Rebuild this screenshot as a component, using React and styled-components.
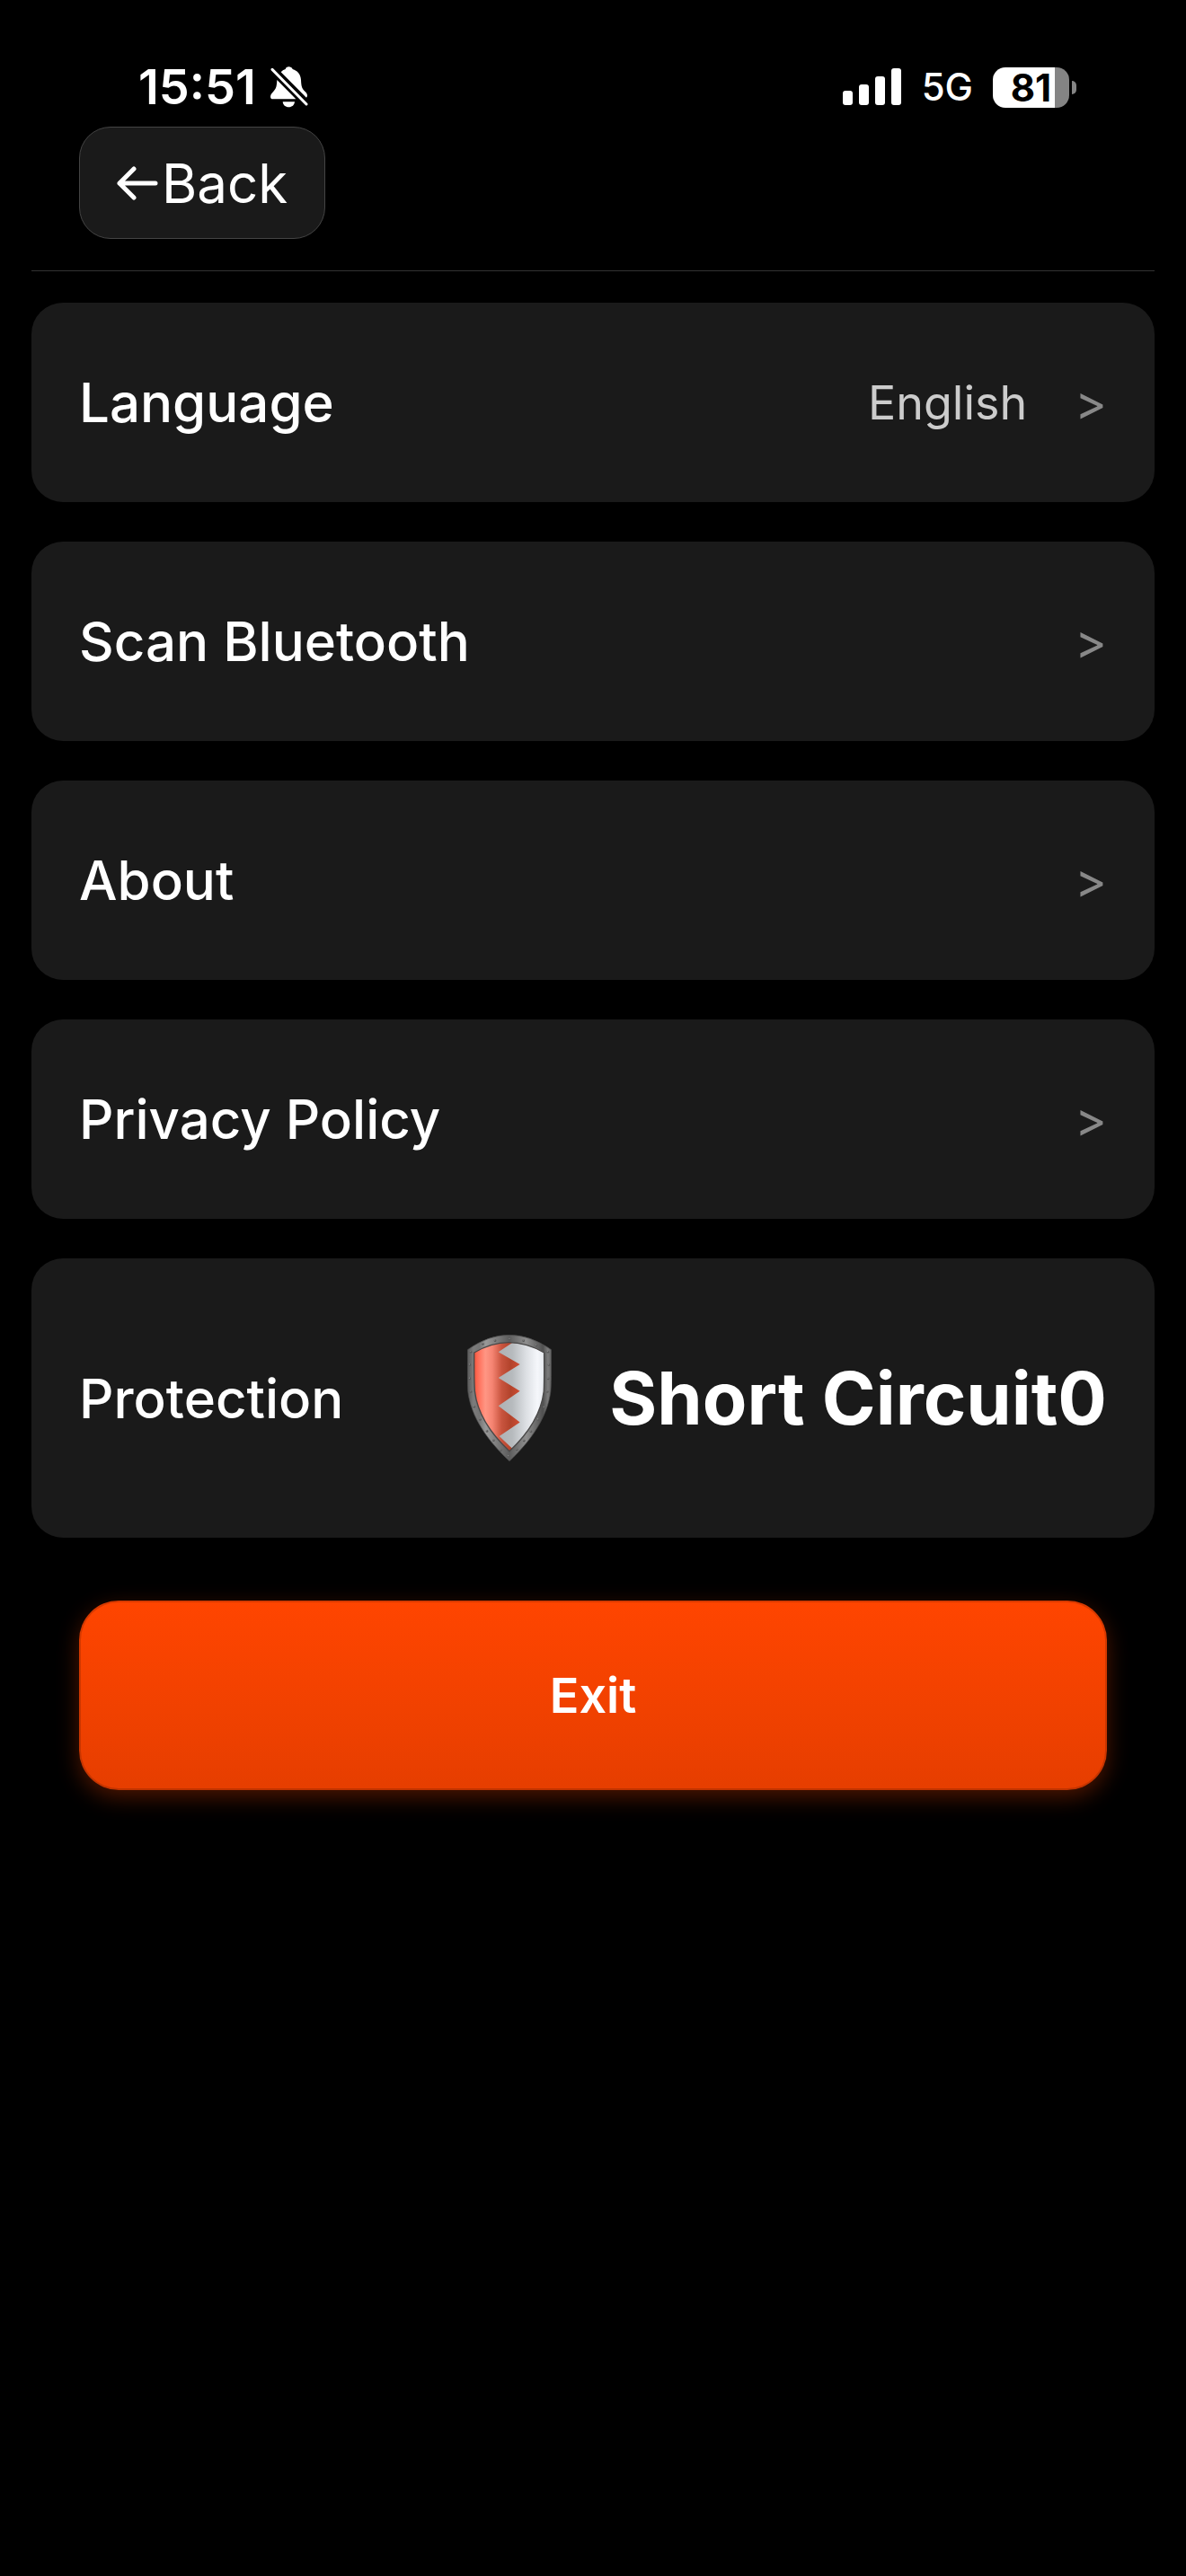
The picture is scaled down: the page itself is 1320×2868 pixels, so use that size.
import React from "react";
import styled, { createGlobalStyle } from "styled-components";

const GlobalStyle = createGlobalStyle`
  * {
    box-sizing: border-box;
  }

  body {
    margin: 0;
    background: #000;
    color: #fff;
    font-family: Inter, "Liberation Sans", sans-serif;
  }

  button {
    font-family: inherit;
    color: inherit;
    cursor: pointer;
  }
`;

const rows = [
  { label: "Language", value: "English" },
  { label: "Scan Bluetooth" },
  { label: "About" },
  { label: "Privacy Policy" },
];

const BellOff = () => (
  <svg width="42" height="46" viewBox="0 0 126 138" aria-label="Silent" role="img">
    <path
      fill="#fff"
      d="M35 19 C40 13 46 10 50 9 C51 4 56 1 61 1 C67 1 72 4 74 9 C90 14 101 26 102 45 C103 66 105 73 112 80 C119 86 123 91 123 97 C123 100 122 102 120 104 Z"
    />
    <path
      fill="#fff"
      d="M22 45 L85 109 L8 109 C3 109 0 106 0 101 C0 93 6 88 12 81 C19 74 21 66 22 45 Z"
    />
    <path fill="#fff" d="M41 118 H81 C80 129 72 136 61 136 C50 136 42 129 41 118 Z" />
    <path stroke="#fff" strokeWidth="9" strokeLinecap="round" d="M6 10 L120 126" />
  </svg>
);

const Signal = () => (
  <svg width="66" height="42" viewBox="0 0 66 42" fill="#fff" aria-label="Signal" role="img">
    <rect x="0" y="25" width="11" height="16" rx="3" />
    <rect x="18" y="18" width="11" height="23" rx="3" />
    <rect x="36" y="9" width="11" height="32" rx="3" />
    <rect x="54" y="0" width="11" height="41" rx="3" />
  </svg>
);

const ArrowLeft = () => (
  <svg width="46" height="38" viewBox="0 0 46 38" aria-hidden="true">
    <path
      d="M43 19 H3 M19 3 L3 19 L19 35"
      fill="none"
      stroke="#fff"
      strokeWidth="5"
      strokeLinecap="round"
      strokeLinejoin="round"
    />
  </svg>
);

const rivets = [
  [142, 14], [93, 19], [188, 19], [52, 30], [231, 35], [12, 57], [270, 57],
  [8, 100], [273, 100], [8, 146], [271, 146], [12, 190], [268, 190],
  [23, 240], [257, 242], [43, 283], [237, 283], [66, 322], [213, 323],
  [88, 353], [190, 354], [112, 386], [166, 384], [138, 406],
];

const Shield = () => (
  <svg width="94" height="141" viewBox="0 0 282 424" aria-label="Shield" role="img">
    <defs>
      <linearGradient id="rim" x1="0" y1="0" x2="1" y2="0">
        <stop offset="0" stopColor="#5a5a5a" />
        <stop offset="0.07" stopColor="#7c7c7c" />
        <stop offset="0.14" stopColor="#747474" />
        <stop offset="0.22" stopColor="#999" />
        <stop offset="0.5" stopColor="#5c5c5c" />
        <stop offset="0.7" stopColor="#8e8e8e" />
        <stop offset="0.9" stopColor="#505050" />
        <stop offset="0.96" stopColor="#7c7c7c" />
        <stop offset="1" stopColor="#606060" />
      </linearGradient>
      <linearGradient id="red" gradientUnits="userSpaceOnUse" x1="22" y1="0" x2="176" y2="0">
        <stop offset="0" stopColor="#f4533a" />
        <stop offset="0.1" stopColor="#ff705b" />
        <stop offset="0.25" stopColor="#ff9684" />
        <stop offset="0.4" stopColor="#f58472" />
        <stop offset="0.6" stopColor="#c9553f" />
        <stop offset="0.8" stopColor="#b2432b" />
        <stop offset="1" stopColor="#d04c32" />
      </linearGradient>
      <linearGradient id="silver" gradientUnits="userSpaceOnUse" x1="104" y1="0" x2="258" y2="0">
        <stop offset="0" stopColor="#aeb1b4" />
        <stop offset="0.3" stopColor="#b6babd" />
        <stop offset="0.6" stopColor="#dcdfe3" />
        <stop offset="0.85" stopColor="#f5f7fb" />
        <stop offset="1" stopColor="#e6e9ee" />
      </linearGradient>
      <clipPath id="face">
        <path d="M23 60 Q138 -8 257 60 C257 95 258 150 256 190 C247 265 200 335 141 390 C82 335 34 265 25 190 C22 150 23 95 23 60 Z" />
      </clipPath>
    </defs>
    <path
      fill="url(#rim)"
      stroke="#4c4c4c"
      strokeWidth="2"
      d="M1 50 Q140 -48 281 50 C281 95 282 150 279 190 C268 275 214 355 141 423 C68 355 12 275 2 190 C0 150 1 95 1 50 Z"
    />
    <g clipPath="url(#face)">
      <rect width="282" height="424" fill="url(#red)" />
      <path
        fill="url(#silver)"
        d="M170 14 L104 58 L176 99 L104 144 L176 189 L104 238 L176 293 L107 340 L160 390 L282 424 V0 Z"
      />
    </g>
    <path
      fill="none"
      stroke="#484848"
      strokeWidth="4"
      d="M23 60 Q138 -8 257 60 C257 95 258 150 256 190 C247 265 200 335 141 390 C82 335 34 265 25 190 C22 150 23 95 23 60 Z"
    />
    {rivets.map(([x, y]) => (
      <g key={`${x}-${y}`}>
        <circle cx={x} cy={y + 1} r="4" fill="#585858" />
        <circle cx={x - 1} cy={y - 1} r="2" fill="#8c8c8c" />
      </g>
    ))}
  </svg>
);

class App extends React.Component {
  render() {
    return (
      <>
        <GlobalStyle />
        <StatusBar>
          <StatusGroup $gap="16px">
            <Time>15:51</Time>
            <BellOff />
          </StatusGroup>
          <StatusGroup $gap="22px">
            <Signal />
            <Network>5G</Network>
            <Battery>
              <BatteryBody>81</BatteryBody>
              <BatteryTip />
            </Battery>
          </StatusGroup>
        </StatusBar>
        <PageContainer>
          <Header>
            <BackButton type="button">
              <ArrowLeft />
              Back
            </BackButton>
          </Header>
          <List>
            {rows.map(({ label, value }) => (
              <RowButton type="button" key={label}>
                <Label>{label}</Label>
                <RowEnd>
                  {value && <Value>{value}</Value>}
                  <Chevron>&gt;</Chevron>
                </RowEnd>
              </RowButton>
            ))}
            <ProtectionRow>
              <Label>Protection</Label>
              <Protection>
                <Shield />
                <ProtectionName>Short Circuit0</ProtectionName>
              </Protection>
            </ProtectionRow>
          </List>
          <ExitButton type="button">Exit</ExitButton>
        </PageContainer>
      </>
    );
  }
}

const StatusBar = styled.div`
  display: flex;
  justify-content: space-between;
  align-items: flex-end;
  height: 141px;
  padding: 0 122px 20px 154px;
`;

const StatusGroup = styled.div`
  display: flex;
  align-items: center;
  gap: ${({ $gap }) => $gap};
  height: 48px;
`;

const Time = styled.span`
  font-size: 54px;
  font-weight: 600;
  line-height: 48px;
`;

const Network = styled.span`
  font-size: 42px;
  font-weight: 500;
  line-height: 48px;
`;

const Battery = styled.div`
  display: flex;
  align-items: center;
  gap: 3px;
`;

const BatteryBody = styled.div`
  width: 85px;
  height: 45px;
  border-radius: 14px;
  background: linear-gradient(to right, #fff 81%, #848484 81%);
  color: #000;
  font-size: 42px;
  font-weight: 700;
  line-height: 45px;
  text-align: center;
`;

const BatteryTip = styled.div`
  width: 5px;
  height: 15px;
  border-radius: 0 8px 8px 0;
  background: #848484;
`;

const PageContainer = styled.main`
  display: flex;
  flex-direction: column;
  padding: 0 35px 44px;
`;

const Header = styled.header`
  display: flex;
  padding: 0 53px 35px;
  border-bottom: 1px solid #333;
`;

const BackButton = styled.button`
  display: flex;
  align-items: center;
  gap: 4px;
  height: 125px;
  padding: 0 41px;
  border: 1px solid #444;
  border-radius: 35px;
  background: #1a1a1a;
  font-size: 60px;
  font-weight: 400;
`;

const List = styled.div`
  display: flex;
  flex-direction: column;
  gap: 44px;
  padding: 35px 0 70px;
`;

const Row = styled.div`
  display: flex;
  justify-content: space-between;
  align-items: center;
  width: 100%;
  height: 222px;
  padding: 0 53px;
  border: 0;
  border-radius: 35px;
  background: #1a1a1a;
`;

const RowButton = styled(Row).attrs({ as: "button" })``;

const ProtectionRow = styled(Row)`
  height: 311px;
`;

const Label = styled.span`
  font-size: 60px;
  font-weight: 500;
`;

const RowEnd = styled.span`
  display: flex;
  align-items: center;
  gap: 53px;
`;

const Value = styled.span`
  color: #ccc;
  font-size: 52px;
`;

const Chevron = styled.span`
  color: #888;
  font-size: 54px;
`;

const Protection = styled.div`
  display: flex;
  align-items: center;
  gap: 64px;
`;

const ProtectionName = styled.strong`
  font-size: 81px;
  font-weight: 700;
`;

const ExitButton = styled.button`
  height: 211px;
  margin: 0 53px;
  border: 2px solid rgba(0, 0, 0, 0.15);
  border-radius: 44px;
  background: linear-gradient(to bottom, #ff4500, #e63e00) border-box;
  box-shadow: 0 8px 24px rgba(255, 69, 0, 0.3);
  font-size: 54px;
  font-weight: 600;
`;

export default App;
